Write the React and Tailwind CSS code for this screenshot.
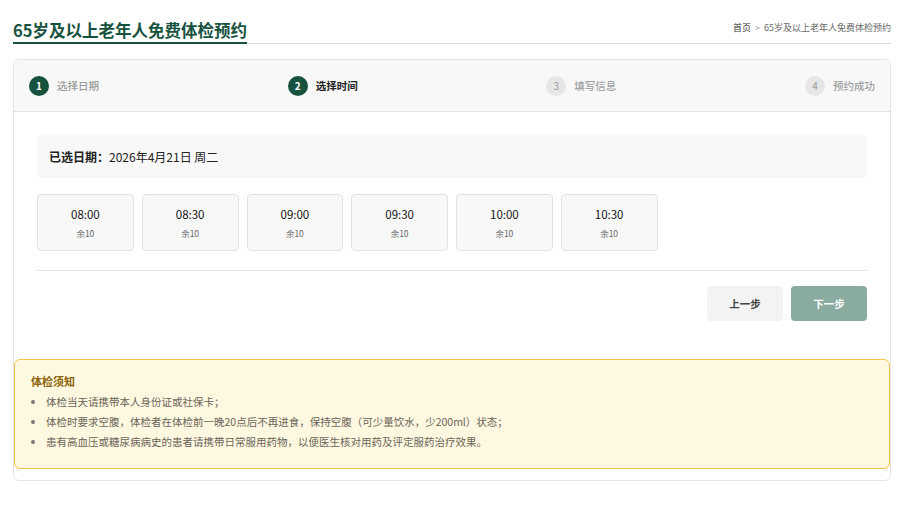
import React from 'react';

const STEPS = [
  { n: 1, label: '选择日期', state: 'done' },
  { n: 2, label: '选择时间', state: 'active' },
  { n: 3, label: '填写信息', state: 'todo' },
  { n: 4, label: '预约成功', state: 'todo' },
];

const SLOTS = ['08:00', '08:30', '09:00', '09:30', '10:00', '10:30'];

const NOTES = [
  '体检当天请携带本人身份证或社保卡；',
  '体检时要求空腹，体检者在体检前一晚20点后不再进食，保持空腹（可少量饮水，少200ml）状态；',
  '患有高血压或糖尿病病史的患者请携带日常服用药物，以便医生核对用药及评定服药治疗效果。',
];

const Step = ({ n, label, state }) => {
  const on = state !== 'todo';
  return (
    <div className="flex items-center gap-[8px]">
      <span
        className={
          on
            ? 'flex h-[20px] w-[20px] items-center justify-center rounded-full bg-[#17523f] text-[10px] font-bold text-white'
            : 'flex h-[20px] w-[20px] items-center justify-center rounded-full bg-[#e6e6e6] text-[10px] text-[#9a9a9a]'
        }
      >
        {n}
      </span>
      <span
        className={
          state === 'active'
            ? 'text-[10.5px] font-bold text-[#222222]'
            : state === 'done'
            ? 'text-[10.5px] font-medium text-[#9a9a9a]'
            : 'text-[10.5px] font-medium text-[#a0a0a0]'
        }
      >
        {label}
      </span>
    </div>
  );
};

export default function App() {
  return (
    <div
      className="min-h-screen bg-white pl-[13px] pr-[17px]"
      style={{ fontFamily: '"Noto Sans CJK SC", "Noto Sans", sans-serif' }}
    >
      {/* header */}
      <div className="flex items-end justify-between border-b border-[#dddddd]">
        <h1 className="-mb-px border-b-2 border-[#17523f] pt-[19px] pb-[1px] text-[16.5px] font-bold leading-[22px] text-[#17523f]">
          65岁及以上老年人免费体检预约
        </h1>
        <div className="pb-[9px] text-[9px] leading-[12px] text-[#666666]">
          <span className="text-[#333333]">首页</span>
          <span className="mx-[4px] text-[#999999]">&gt;</span>
          <span>65岁及以上老年人免费体检预约</span>
        </div>
      </div>

      {/* card */}
      <div className="mt-[15px] overflow-hidden rounded-[6px] border border-[#e3e3e3] bg-white">
        <div className="flex h-[52px] items-center justify-between border-b border-[#e3e3e3] bg-[#f8f8f8] px-[15px]">
          {STEPS.map((s) => (
            <Step key={s.n} {...s} />
          ))}
        </div>

        <div className="px-[23px] pt-[23px] pb-[23px]">
          <div className="flex h-[43px] items-center rounded-[4px] bg-[#f8f8f8] px-[12px] text-[12px] text-[#222222]">
            <span className="font-bold">已选日期：</span>
            <span>2026年4月21日 周二</span>
          </div>

          <div className="mt-[16px] grid grid-cols-8 gap-[8px]">
            {SLOTS.map((t) => (
              <div
                key={t}
                className="flex h-[57px] flex-col items-center rounded-[4px] border border-[#e2e2e2] bg-[#f8f8f8] pt-[11px]"
              >
                <span className="text-[11.5px] leading-[16px] text-[#111111]">{t}</span>
                <span className="mt-[5px] text-[8.5px] leading-[12px] text-[#666666]">余10</span>
              </div>
            ))}
          </div>

          <div className="mt-[19px] border-t border-[#e5e5e5]" />

          <div className="mt-[15px] flex justify-end gap-[8px]">
            <button className="h-[35px] w-[76px] rounded-[4px] bg-[#f3f3f3] text-[10.5px] font-bold text-[#444444]">
              上一步
            </button>
            <button className="h-[35px] w-[76px] rounded-[4px] bg-[#8aaba0] text-[10.5px] font-bold text-white">
              下一步
            </button>
          </div>
        </div>

        <div className="mt-[15px] mb-[11px] rounded-[6px] border border-[#f2c44a] bg-[#fff8e1] px-[16px] pt-[14px] pb-[16px]">
          <div className="mb-[4px] text-[11px] font-bold leading-[14px] text-[#8a6209]">体检须知</div>
          <ul>
            {NOTES.map((t) => (
              <li key={t} className="flex items-center gap-[11px] text-[10.5px] leading-[20px] text-[#6a6458]">
                <span className="h-[4px] w-[4px] shrink-0 rounded-full bg-[#777777]" />
                {t}
              </li>
            ))}
          </ul>
        </div>
      </div>
    </div>
  );
}
